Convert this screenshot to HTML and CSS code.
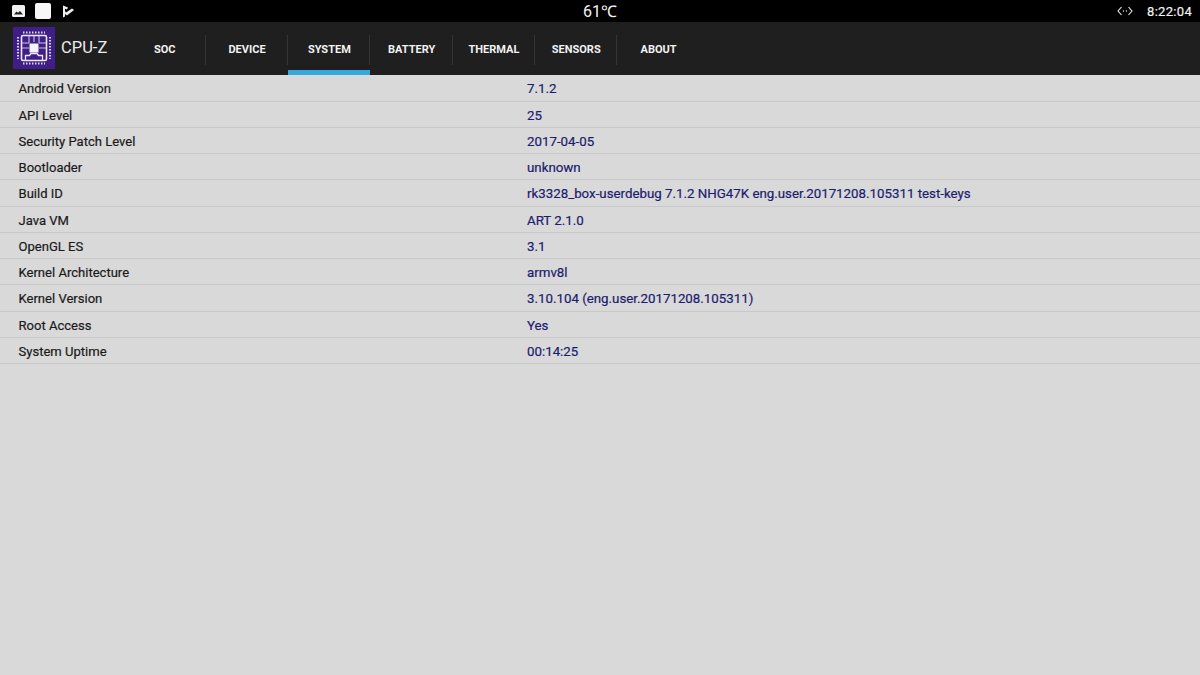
FILE: index.html
```html
<!DOCTYPE html>
<html lang="en">
<head>
<meta charset="utf-8">
<title>CPU-Z</title>
<link rel="stylesheet" href="styles.css">
</head>
<body>
<div class="status">
  <div class="status-left">
    <svg class="ic-pic" width="13" height="12" viewBox="0 0 13 12"><rect width="13" height="12" rx="1.5" fill="#f2f2f2"/><path d="M2 9.500 4.500 6.500l1.500 1.300L8 6l3 3.500z" fill="#222"/></svg>
    <span class="ic-white"></span>
    <svg class="ic-check" width="12" height="13" viewBox="0 0 12 13"><path d="M1 .5 6 2.500 5 4.500 3 3.800v2.200l1 1.500L10 3.500 12 5 5 10.500 3 9 3 11.500 1 12.500z" fill="#efefef"/></svg>
  </div>
  <div class="status-temp">61℃</div>
  <div class="status-right">
    <svg width="16" height="10" viewBox="0 0 16 10"><path d="M4.500 1 1 5l3.500 4M11.500 1 15 5l-3.500 4" fill="none" stroke="#eee" stroke-width="1.100"/><circle cx="6.500" cy="5" r=".7" fill="#eee"/><circle cx="9.500" cy="5" r=".7" fill="#eee"/></svg>
    <span class="clock">8:22:04</span>
  </div>
</div>
<header class="appbar">
  <div class="brand">
    <svg class="logo" width="42" height="42" viewBox="0 0 42 42">
      <rect width="42" height="42" fill="#3f1f87"/>
      <g fill="none" stroke="#ece8f6">
        <rect x="8.500" y="8.500" width="25" height="25" rx="1.500" stroke-width="1.600"/>
        <path d="M12.500 33v-4.500h4l1.500-2h6l1.500 2h4V33" stroke-width="1.300"/>
        <path d="M16 9v7M21 9v6M26 9v7M9 16h7M9 21h7M26 21h7M26 16h7" stroke-width="1.100" stroke-opacity=".8"/>
      </g>
      <rect x="16.500" y="16.500" width="9" height="9" fill="#f5f3fa"/>
      <g stroke="#dcd5ee" stroke-width="2" stroke-dasharray="1.500 1.500">
        <path d="M10 5.500h22M10 36.500h22M5 10v22M37 10v22"/>
      </g>
    </svg>
    <span class="brand-name">CPU-Z</span>
  </div>
  <nav class="tabs">
    <a class="tab">SOC</a>
    <a class="tab">DEVICE</a>
    <a class="tab active">SYSTEM</a>
    <a class="tab">BATTERY</a>
    <a class="tab">THERMAL</a>
    <a class="tab">SENSORS</a>
    <a class="tab last">ABOUT</a>
  </nav>
</header>
<main class="list">
  <div class="row"><span class="key">Android Version</span><span class="val">7.1.2</span></div>
  <div class="row"><span class="key">API Level</span><span class="val">25</span></div>
  <div class="row"><span class="key">Security Patch Level</span><span class="val">2017-04-05</span></div>
  <div class="row"><span class="key">Bootloader</span><span class="val">unknown</span></div>
  <div class="row"><span class="key">Build ID</span><span class="val">rk3328_box-userdebug 7.1.2 NHG47K eng.user.20171208.105311 test-keys</span></div>
  <div class="row"><span class="key">Java VM</span><span class="val">ART 2.1.0</span></div>
  <div class="row"><span class="key">OpenGL ES</span><span class="val">3.1</span></div>
  <div class="row"><span class="key">Kernel Architecture</span><span class="val">armv8l</span></div>
  <div class="row"><span class="key">Kernel Version</span><span class="val">3.10.104 (eng.user.20171208.105311)</span></div>
  <div class="row"><span class="key">Root Access</span><span class="val">Yes</span></div>
  <div class="row"><span class="key">System Uptime</span><span class="val">00:14:25</span></div>
</main>
</body>
</html>
```

FILE: styles.css
```css
* { box-sizing: border-box; }
html, body { margin: 0; height: 100%; }
body {
  width: 1200px;
  height: 675px;
  overflow: hidden;
  background: #d9d9d9;
  font-family: Roboto, "Liberation Sans", sans-serif;
}
.status {
  height: 22px;
  background: #000;
  display: grid;
  grid-template-columns: 1fr auto 1fr;
  align-items: center;
  color: #f2f2f2;
  padding: 0 8px 0 12px;
}
.status-left { display: flex; align-items: center; gap: 10px; }
.ic-white { width: 16px; height: 16px; background: #f7f7f7; border-radius: 2px; }
.ic-check { margin-left: 1px; }
.status-temp { font-size: 16px; margin-left: -4px; }
.status-right { display: flex; justify-content: flex-end; align-items: center; gap: 14px; }
.clock { font-size: 13px; letter-spacing: .3px; -webkit-text-stroke: .2px; }
.appbar {
  height: 53px;
  background: #1f1f1f;
  display: flex;
  align-items: stretch;
}
.brand { width: 123.600px; display: flex; align-items: center; padding: 0 0 2px 13px; gap: 6px; }
.logo { flex: none; }
.brand-name { color: #ececec; font-size: 16.500px; }
.tabs { display: flex; }
.tab {
  width: 82.300px;
  height: 100%;
  display: flex;
  align-items: center;
  justify-content: center;
  padding-top: 1px;
  color: #f2f2f2;
  font-size: 11px;
  font-weight: 700;
  position: relative;
}
.tab::after {
  content: "";
  position: absolute;
  right: 0;
  top: 13px;
  height: 30px;
  width: 1px;
  background: #343434;
}
.tab.last::after { display: none; }
.tab.active { box-shadow: inset 0 -5px 0 #35a9dc; }
.list { display: flex; flex-direction: column; padding-top: .4px; }
.row {
  height: 26.250px;
  display: flex;
  align-items: center;
  padding: 1.700px 0 0 18.500px;
  border-bottom: 1px solid #c8c8c8;
  -webkit-text-stroke: .2px;
}
.key { width: 508.500px; color: #1a1a1a; font-size: 13.050px; }
.val { color: #1c1c6e; font-size: 13.300px; }
```
